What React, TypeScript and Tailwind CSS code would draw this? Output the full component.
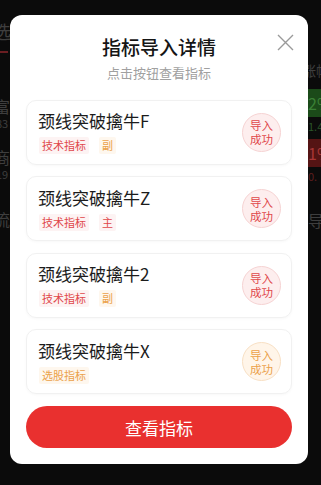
import React from "react";

type Tag = { text: string; tone: "red" | "orange" };
type Item = { name: string; tags: Tag[]; tone: "red" | "orange" };

const items: Item[] = [
  { name: "颈线突破擒牛F", tags: [{ text: "技术指标", tone: "red" }, { text: "副", tone: "orange" }], tone: "red" },
  { name: "颈线突破擒牛Z", tags: [{ text: "技术指标", tone: "red" }, { text: "主", tone: "red" }], tone: "red" },
  { name: "颈线突破擒牛2", tags: [{ text: "技术指标", tone: "red" }, { text: "副", tone: "orange" }], tone: "red" },
  { name: "颈线突破擒牛X", tags: [{ text: "选股指标", tone: "orange" }], tone: "orange" },
];

function TagChip({ tag }: { tag: Tag }) {
  return tag.tone === "red" ? (
    <span className="px-[3px] h-[17px] flex items-center text-[11px] leading-none text-[#e0474a] bg-[#fdf3f3] rounded-[2px]">
      {tag.text}
    </span>
  ) : (
    <span className="px-[3px] h-[17px] flex items-center text-[11px] leading-none text-[#eba14a] bg-[#fef7ee] rounded-[2px]">
      {tag.text}
    </span>
  );
}

function Badge({ tone }: { tone: "red" | "orange" }) {
  return tone === "red" ? (
    <div className="w-[39px] h-[39px] rounded-full border border-[#f6d3d3] bg-[#fdeeee] flex flex-col items-center justify-center text-[11.5px] leading-[14px] text-[#e0474a]">
      <span>导入</span>
      <span>成功</span>
    </div>
  ) : (
    <div className="w-[39px] h-[39px] rounded-full border border-[#f8e0c4] bg-[#fff5e9] flex flex-col items-center justify-center text-[11.5px] leading-[14px] text-[#eba14a]">
      <span>导入</span>
      <span>成功</span>
    </div>
  );
}

export default function App() {
  return (
    <div
      className="relative w-[321px] h-[485px] overflow-hidden bg-[#0b0b0b]"
      style={{ fontFamily: '"Noto Sans CJK SC", "Noto Sans", sans-serif' }}
    >
      {/* dimmed page underneath */}
      <div className="flex justify-between h-full">
        <div className="w-[12px] overflow-hidden flex flex-col text-[#3e3e3e]">
          <span className="mt-[21px] ml-[-7px] text-[18px] leading-[20px]">选</span>
          <span className="mt-[10px] w-[8px] h-[2px] bg-[#6a1e22]"></span>
          <span className="mt-[44px] ml-[-6px] text-[16px] leading-[18px]">富</span>
          <span className="mt-[2px] ml-[-4px] text-[11px] leading-[12px]">83</span>
          <span className="mt-[19px] ml-[-6px] text-[16px] leading-[18px]">商</span>
          <span className="mt-[2px] ml-[-4px] text-[11px] leading-[12px]">19</span>
          <span className="mt-[30px] ml-[-6px] text-[16px] leading-[18px]">流</span>
        </div>
        <div className="w-[13px] overflow-hidden flex flex-col text-[#3e3e3e]">
          <span className="mt-[62px] ml-[-6px] text-[14px] leading-[16px] whitespace-nowrap">涨幅</span>
          <span className="mt-[11px] h-[28px] bg-[#1b4a19] text-[#3a8035] text-[16px] leading-[28px] whitespace-nowrap">2%</span>
          <span className="mt-[2px] text-[11px] leading-[14px] text-[#2a5528] whitespace-nowrap">1.4</span>
          <span className="mt-[6px] h-[28px] bg-[#551414] text-[#a83636] text-[16px] leading-[28px] whitespace-nowrap">1%</span>
          <span className="mt-[2px] text-[11px] leading-[14px] text-[#5e1f1f] whitespace-nowrap">0.</span>
          <span className="mt-[28px] text-[16px] leading-[18px]">导</span>
        </div>
      </div>

      {/* modal */}
      <div className="absolute left-[10px] top-[15px] w-[298px] h-[449px] bg-white rounded-[12px] flex flex-col px-[16px] pb-[16px]">
        <div className="relative flex flex-col items-center pt-[20px] h-[85px]">
          <span className="text-[19px] leading-[24px] font-medium text-[#151515]">指标导入详情</span>
          <span className="mt-[5px] text-[13px] leading-[17px] text-[#a0a0a0]">点击按钮查看指标</span>
          <svg
            className="absolute right-[-2px] top-[19px]"
            width="17"
            height="17"
            viewBox="0 0 17 17"
            fill="none"
            stroke="#9a9a9a"
            strokeWidth="1.4"
          >
            <path d="M1 1L16 16M16 1L1 16" />
          </svg>
        </div>

        <div className="flex flex-col gap-[11.5px]">
          {items.map((it) => (
            <div
              key={it.name}
              className="h-[65px] rounded-[10px] border border-[#f1f1f1] shadow-[0_1px_3px_rgba(0,0,0,0.03)] flex items-center justify-between pl-[11px] pr-[10px]"
            >
              <div className="flex flex-col">
                <span className="text-[17px] leading-[22px] text-[#1c1c1c]">{it.name}</span>
                <div className="mt-[5px] flex gap-[10px] ml-[1px]">
                  {it.tags.map((t, i) => (
                    <TagChip key={i} tag={t} />
                  ))}
                </div>
              </div>
              <Badge tone={it.tone} />
            </div>
          ))}
        </div>

        <button className="mt-[12px] h-[42px] w-full rounded-full bg-[#e9302f] text-white text-[17px] leading-none flex items-center justify-center">
          查看指标
        </button>
      </div>
    </div>
  );
}
